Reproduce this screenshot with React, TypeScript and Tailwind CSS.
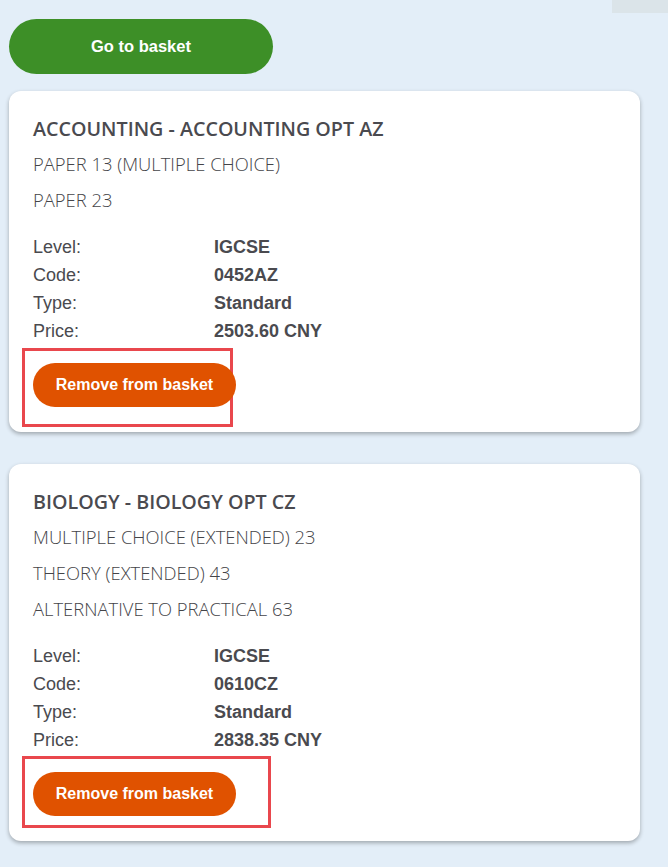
import React from 'react';

type Item = {
  title: string;
  papers: string[];
  level: string;
  code: string;
  type: string;
  price: string;
  mark: string;
};

const items: Item[] = [
  {
    title: 'ACCOUNTING - ACCOUNTING OPT AZ',
    papers: ['PAPER 13 (MULTIPLE CHOICE)', 'PAPER 23'],
    level: 'IGCSE',
    code: '0452AZ',
    type: 'Standard',
    price: '2503.60 CNY',
    mark: 'left-[-11px] top-[-15px] w-[211px] h-[79px]',
  },
  {
    title: 'BIOLOGY - BIOLOGY OPT CZ',
    papers: ['MULTIPLE CHOICE (EXTENDED) 23', 'THEORY (EXTENDED) 43', 'ALTERNATIVE TO PRACTICAL 63'],
    level: 'IGCSE',
    code: '0610CZ',
    type: 'Standard',
    price: '2838.35 CNY',
    mark: 'left-[-11px] top-[-16px] w-[249px] h-[72px]',
  },
];

const BasketCard: React.FC<{ item: Item }> = ({ item }) => {
  const rows = [
    ['Level:', item.level],
    ['Code:', item.code],
    ['Type:', item.type],
    ['Price:', item.price],
  ];
  return (
    <div className="bg-white rounded-xl shadow-[0_2px_4px_rgba(0,0,0,0.3)] px-6 pt-6 pb-[25px] text-[#4a4a4f]">
      <h2 className="font-['Open_Sans',sans-serif] font-semibold text-[19.7px] leading-[28px]">{item.title}</h2>
      <div className="mt-[3px] font-['Open_Sans',sans-serif] font-light text-[18.4px] text-[#444448]">
        {item.papers.map((p) => (
          <div key={p} className="leading-[36px]">{p}</div>
        ))}
      </div>
      <div className="mt-[15px] font-['Liberation_Sans',Arial,sans-serif] text-[18px]">
        {rows.map(([k, v]) => (
          <div key={k} className="flex leading-[28px]">
            <span className="w-[181px]">{k}</span>
            <span className="font-bold">{v}</span>
          </div>
        ))}
      </div>
      <div className="relative mt-[18px] w-fit">
        <button className="relative z-10 bg-[#e05200] text-white rounded-full h-[44px] w-[203px] font-['Liberation_Sans',Arial,sans-serif] font-bold text-[16px]">
          Remove from basket
        </button>
        <div className={`absolute border-[3px] border-[#e9474d] ${item.mark}`} />
      </div>
    </div>
  );
};

export default function App() {
  return (
    <div className="relative min-h-[867px] bg-[#e3eef8] px-[9px] pt-[19px] pb-8">
      <div className="absolute top-0 right-0 w-[56px] h-[13px] bg-[#dbe4e9]" />
      <button className="bg-[#3d8f27] text-white rounded-full h-[55px] w-[264px] font-['Liberation_Sans',Arial,sans-serif] font-bold text-[16.5px]">
        Go to basket
      </button>
      <div className="mt-[17px] w-[631px] flex flex-col gap-8">
        {items.map((it) => (
          <BasketCard key={it.title} item={it} />
        ))}
      </div>
    </div>
  );
}
